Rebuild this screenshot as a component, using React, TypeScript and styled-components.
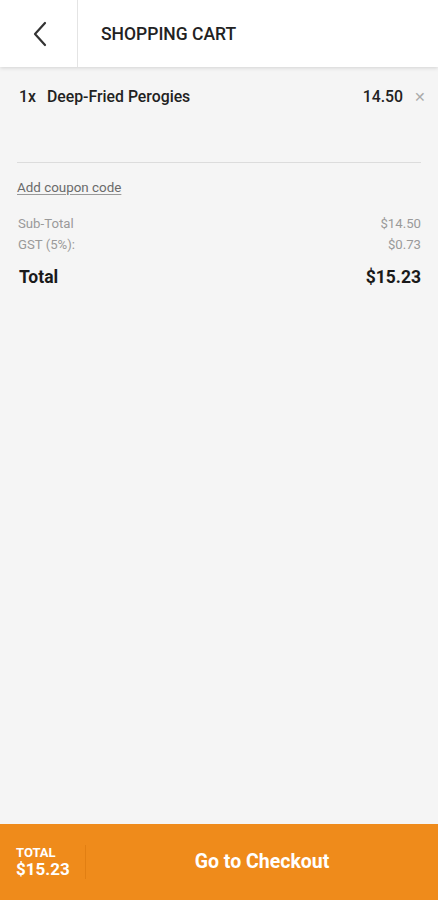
import styled, { createGlobalStyle } from "styled-components";

const GlobalStyle = createGlobalStyle`
  html, body {
    margin: 0;
    padding: 0;
    height: 100%;
    background: #f5f5f5;
  }
  #root {
    height: 100%;
  }
  * {
    box-sizing: border-box;
  }
`;

const Screen = styled.div`
  height: 900px;
  display: flex;
  flex-direction: column;
  font-family: Roboto, "Liberation Sans", sans-serif;
  background: #f5f5f5;
  color: #222;
`;

const Header = styled.header`
  height: 67px;
  flex: none;
  display: flex;
  align-items: stretch;
  background: #fff;
  box-shadow: 0 1px 4px rgba(0, 0, 0, 0.14);
  position: relative;
  z-index: 1;
`;

const BackButton = styled.button`
  width: 78px;
  border: none;
  border-right: 1px solid #e4e4e4;
  background: transparent;
  display: flex;
  align-items: center;
  justify-content: center;
  padding: 0 0 0 2px;
  color: #333;
`;

const Title = styled.h1`
  margin: 0;
  padding-left: 23px;
  display: flex;
  align-items: center;
  font-size: 17.5px;
  font-weight: 500;
  color: #222;
`;

const Content = styled.main`
  flex: 1;
  padding: 0 17px;
`;

const ItemRow = styled.div`
  display: flex;
  align-items: center;
  height: 58px;
  padding-top: 1px;
  padding-left: 2px;
  font-size: 15.8px;
  font-weight: 500;
  color: #222;
`;

const Qty = styled.span`
  width: 28px;
`;

const ItemName = styled.span`
  flex: 1;
`;

const Price = styled.span`
  margin-right: 11px;
`;

const Remove = styled.span`
  color: #aaa;
  font-size: 14px;
  font-weight: 400;
  margin-right: -5px;
`;

const Divider = styled.div`
  height: 38px;
  border-bottom: 1px solid #dcdcdc;
`;

const CouponLink = styled.a`
  display: inline-block;
  margin-top: 17px;
  font-size: 13.4px;
  color: #6a6a6a;
  text-decoration: underline;
  text-underline-offset: 2px;
  text-decoration-color: #999;
`;

const Summary = styled.div`
  margin-top: 20px;
  display: flex;
  flex-direction: column;
  gap: 5px;
`;

const SummaryRow = styled.div<{ $total?: boolean }>`
  display: flex;
  justify-content: space-between;
  align-items: center;
  padding-left: ${(p) => (p.$total ? "2px" : "1px")};
  font-size: ${(p) => (p.$total ? "17.5px" : "13.2px")};
  font-weight: ${(p) => (p.$total ? 700 : 400)};
  color: ${(p) => (p.$total ? "#1a1a1a" : "#9a9a9a")};
  margin-top: ${(p) => (p.$total ? "9px" : "0")};
  line-height: ${(p) => (p.$total ? "20px" : "16px")};
`;

const Footer = styled.footer`
  height: 76px;
  flex: none;
  display: flex;
  align-items: center;
  background: #ef8b1b;
  color: #fff;
`;

const FooterTotal = styled.div`
  width: 86px;
  padding-left: 16px;
  height: 34px;
  border-right: 1px solid #e27f12;
  display: flex;
  flex-direction: column;
  justify-content: center;
  font-weight: 700;
`;

const TotalLabel = styled.span`
  font-size: 13px;
  line-height: 15px;
`;

const TotalValue = styled.span`
  font-size: 17px;
  line-height: 19px;
`;

const CheckoutButton = styled.button`
  flex: 1;
  height: 100%;
  border: none;
  background: transparent;
  color: #fff;
  font-family: inherit;
  font-size: 19.5px;
  font-weight: 700;
  padding: 0 0 2px 0;
`;

const App = () => {
  return (
    <Screen>
      <GlobalStyle />
      <Header>
        <BackButton aria-label="Back">
          <svg width="16" height="26" viewBox="0 0 16 26" fill="none">
            <path d="M13 2 L3 13 L13 24" stroke="#333" strokeWidth="2.2" strokeLinecap="round" strokeLinejoin="round" />
          </svg>
        </BackButton>
        <Title>SHOPPING CART</Title>
      </Header>

      <Content>
        <ItemRow>
          <Qty>1x</Qty>
          <ItemName>Deep-Fried Perogies</ItemName>
          <Price>14.50</Price>
          <Remove>✕</Remove>
        </ItemRow>
        <Divider />
        <CouponLink>Add coupon code</CouponLink>
        <Summary>
          <SummaryRow>
            <span>Sub-Total</span>
            <span>$14.50</span>
          </SummaryRow>
          <SummaryRow>
            <span>GST (5%):</span>
            <span>$0.73</span>
          </SummaryRow>
          <SummaryRow $total>
            <span>Total</span>
            <span>$15.23</span>
          </SummaryRow>
        </Summary>
      </Content>

      <Footer>
        <FooterTotal>
          <TotalLabel>TOTAL</TotalLabel>
          <TotalValue>$15.23</TotalValue>
        </FooterTotal>
        <CheckoutButton>Go to Checkout</CheckoutButton>
      </Footer>
    </Screen>
  );
};

export default App;
